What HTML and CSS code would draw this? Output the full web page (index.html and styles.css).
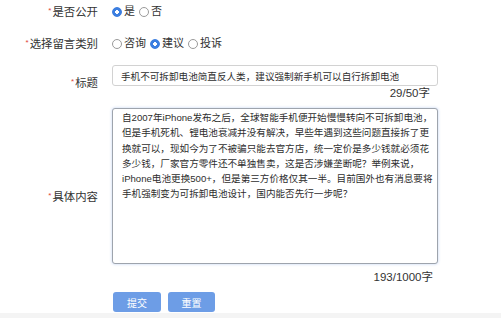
FILE: index.html
```html
<!DOCTYPE html>
<html lang="zh-CN">
<head>
<meta charset="utf-8">
<title>留言</title>
<link rel="stylesheet" href="styles.css">
</head>
<body>
<form class="form">
  <div class="row row-public">
    <div class="label"><span class="star">*</span>是否公开</div>
    <div class="radios">
      <label class="radio"><input type="radio" name="pub" checked><span>是</span></label>
      <label class="radio"><input type="radio" name="pub"><span>否</span></label>
    </div>
  </div>
  <div class="row row-type">
    <div class="label"><span class="star">*</span>选择留言类别</div>
    <div class="radios">
      <label class="radio"><input type="radio" name="type"><span>咨询</span></label>
      <label class="radio"><input type="radio" name="type" checked><span>建议</span></label>
      <label class="radio"><input type="radio" name="type"><span>投诉</span></label>
    </div>
  </div>
  <div class="row row-title">
    <div class="label"><span class="star">*</span>标题</div>
    <div class="field">
      <input class="text-input" type="text" value="手机不可拆卸电池简直反人类，建议强制新手机可以自行拆卸电池">
      <div class="counter counter-title">29/50字</div>
    </div>
  </div>
  <div class="row row-content">
    <div class="label"><span class="star">*</span>具体内容</div>
    <div class="field">
      <textarea class="text-area">自2007年iPhone发布之后，全球智能手机便开始慢慢转向不可拆卸电池，但是手机死机、锂电池衰减并没有解决，早些年遇到这些问题直接拆了更换就可以，现如今为了不被骗只能去官方店，统一定价是多少钱就必须花多少钱，厂家官方零件还不单独售卖，这是否涉嫌垄断呢？举例来说，iPhone电池更换500+，但是第三方价格仅其一半。目前国外也有消息要将手机强制变为可拆卸电池设计，国内能否先行一步呢？</textarea>
      <div class="counter counter-content">193/1000字</div>
    </div>
  </div>
  <div class="actions">
    <button type="button" class="btn btn-submit">提交</button>
    <button type="button" class="btn btn-reset">重置</button>
  </div>
</form>
<div class="footer"></div>
</body>
</html>
```

FILE: styles.css
```css
html, body {
  margin: 0;
  padding: 0;
  background: #ffffff;
}

body {
  font-family: "Liberation Sans", "Noto Sans CJK SC", sans-serif;
  color: #333333;
  overflow: hidden;
}

.form {
  padding-top: 2px;
}

.row {
  display: grid;
  grid-template-columns: 98px 326px;
  column-gap: 14px;
  align-items: center;
}

.row-public {
  height: 17px;
}

.row-type {
  height: 17px;
  margin-top: 15px;
}

.row-title {
  margin-top: 14px;
}

.row-content {
  margin-top: 8px;
}

.label {
  text-align: right;
  font-size: 11.4px;
  line-height: 17px;
  color: #333333;
  white-space: nowrap;
}

.star {
  color: #e0443a;
  font-size: 8px;
  vertical-align: 3px;
  margin-right: 1px;
}

.radios {
  display: flex;
  align-items: center;
  font-size: 11px;
  line-height: 17px;
  color: #333333;
}

.radio {
  display: flex;
  align-items: center;
  margin-right: 4px;
}

.radio input {
  -webkit-appearance: none;
  appearance: none;
  width: 10px;
  height: 10px;
  margin: 0 2px 0 0;
  border: 1px solid #9a9a9a;
  border-radius: 50%;
  background: #ffffff;
  box-sizing: border-box;
}

.radio input:checked {
  border-color: #3b7ee0;
  background: radial-gradient(circle, #ffffff 0 1.6px, #3b7ee0 2px);
}

.field {
  display: flex;
  flex-direction: column;
}

.text-input {
  box-sizing: border-box;
  width: 326px;
  height: 21px;
  margin: 0;
  padding: 0 8px;
  border: 1px solid #d2d2d2;
  border-radius: 3px;
  font-family: "Liberation Sans", "Noto Sans CJK SC", sans-serif;
  font-size: 9.6px;
  color: #2e2e2e;
  background: #ffffff;
  outline: none;
}

.text-area {
  box-sizing: border-box;
  width: 326px;
  height: 156px;
  margin: 0;
  padding: 1px 2px 0 9px;
  border: 1px solid #9ea4ad;
  border-radius: 3px;
  box-shadow: 0 0 3px rgba(110, 150, 225, 0.45);
  font-family: "Liberation Sans", "Noto Sans CJK SC", sans-serif;
  font-size: 9.6px;
  line-height: 15.3px;
  color: #2e2e2e;
  background: #ffffff;
  resize: none;
  outline: none;
  overflow: hidden;
}

.counter {
  font-size: 11.5px;
  line-height: 14px;
  text-align: right;
  color: #333333;
}

.counter-title {
  padding-right: 8px;
}

.counter-content {
  margin-top: 6px;
  padding-right: 5px;
}

.actions {
  display: flex;
  gap: 7px;
  margin-top: 8px;
  padding-left: 113px;
}

.btn {
  height: 20px;
  padding: 0;
  border: none;
  border-radius: 3px;
  background: #6d9de6;
  color: #ffffff;
  font-family: "Liberation Sans", "Noto Sans CJK SC", sans-serif;
  font-size: 10px;
}

.btn-submit {
  width: 48px;
}

.btn-reset {
  width: 47px;
}

.footer {
  margin-top: 1px;
  height: 12px;
  background: #f4f4f4;
}
```
